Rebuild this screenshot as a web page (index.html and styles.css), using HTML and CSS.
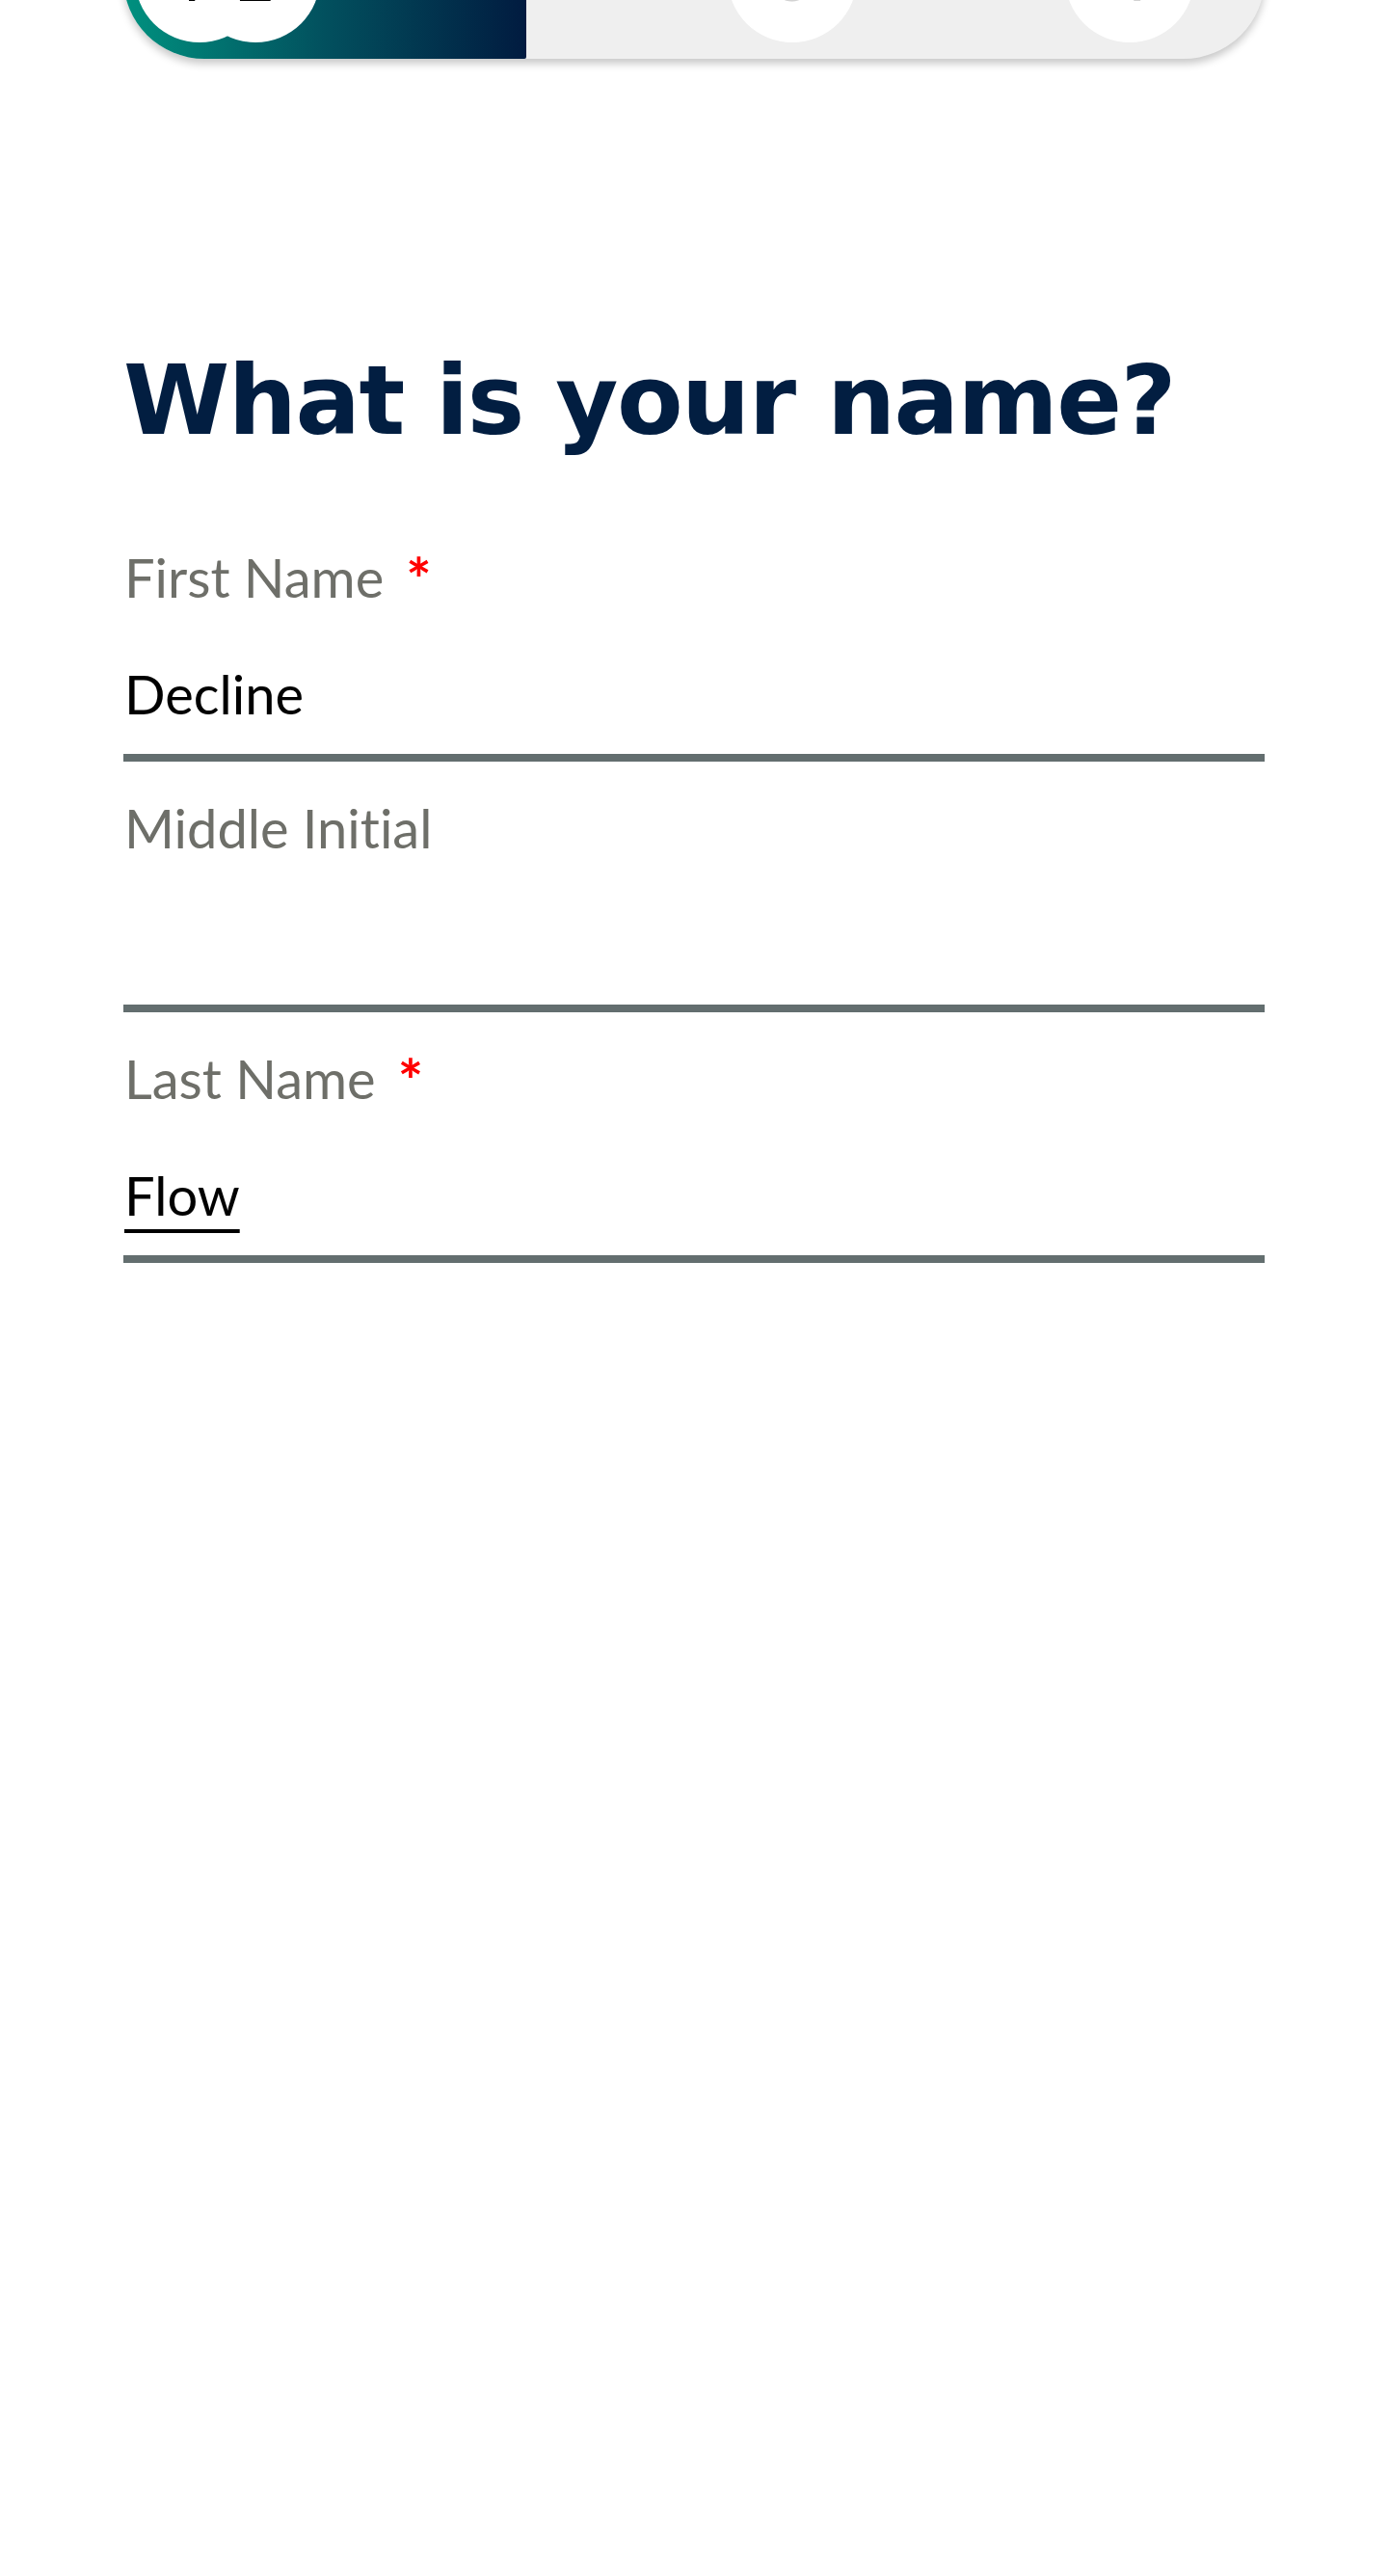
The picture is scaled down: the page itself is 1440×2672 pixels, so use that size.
FILE: index.html
```html
<!DOCTYPE html>
<html lang="en">
<head>
<meta charset="utf-8">
<title>What is your name?</title>
<link rel="stylesheet" href="styles.css">
</head>
<body>
<main class="page">
  <div class="progress">
    <div class="progress-fill"></div>
    <span class="step step-a done">1</span>
    <span class="step step-b done">2</span>
    <span class="step step-c">3</span>
    <span class="step step-d">4</span>
  </div>

  <h1 class="title">What is your name?</h1>

  <form class="form">
    <div class="field">
      <div class="label">First Name<span class="req">*</span></div>
      <div class="value">Decline</div>
    </div>
    <div class="field">
      <div class="label">Middle Initial</div>
      <div class="value"></div>
    </div>
    <div class="field">
      <div class="label">Last Name<span class="req">*</span></div>
      <div class="value"><span class="typed">Flow</span></div>
    </div>
  </form>
</main>
</body>
</html>
```

FILE: styles.css
```css
html, body {
  margin: 0;
  padding: 0;
  background: #ffffff;
}

body {
  min-height: 2672px;
  overflow: hidden;
}

.page {
  width: 1184px;
  padding-left: 128px;
}

.progress {
  position: relative;
  height: 168px;
  margin-top: -107px;
  border-radius: 84px;
  background: #efefef;
  box-shadow: 0 5px 9px rgba(0, 0, 0, 0.22);
  display: flex;
}

.progress-fill {
  width: 418px;
  height: 100%;
  border-radius: 84px 2px 2px 84px;
  background: linear-gradient(to right, #00917f 0%, #02505e 50%, #011b40 100%);
}

.step {
  position: absolute;
  top: 17px;
  width: 134px;
  height: 134px;
  border-radius: 50%;
  background: #ffffff;
  font-family: "Lato", "Liberation Sans", sans-serif;
  font-weight: 700;
  font-size: 64px;
  line-height: 134px;
  text-align: center;
  color: #d2d2d2;
}

.step.done {
  color: #000000;
}

.step-a { left: 12px; }
.step-b { left: 70px; }
.step-c { left: 627px; }
.step-d { left: 977px; }

.title {
  margin: 295px 0 0;
  font-family: "DejaVu Sans", "Liberation Sans", sans-serif;
  font-weight: 700;
  font-size: 100px;
  line-height: 120px;
  letter-spacing: -1.5px;
  color: #021e41;
}

.form {
  margin-top: 54px;
  display: flex;
  flex-direction: column;
}

.field {
  padding-top: 35px;
  padding-bottom: 29px;
  border-bottom: 8px solid #636e6f;
  font-family: "Lato", "Liberation Sans", sans-serif;
  font-size: 56px;
  line-height: 67px;
  font-variant-ligatures: none;
}

.label {
  color: #6e6f69;
  padding-left: 1px;
  height: 67px;
}

.req {
  color: #ff0000;
  margin-left: 23px;
  font-size: 62px;
  font-weight: 700;
  vertical-align: -4px;
}

.value {
  margin-top: 54px;
  height: 67px;
  color: #000000;
  padding-left: 1px;
}

.typed {
  text-decoration: underline;
  text-decoration-thickness: 4px;
  text-underline-offset: 14px;
}
```
